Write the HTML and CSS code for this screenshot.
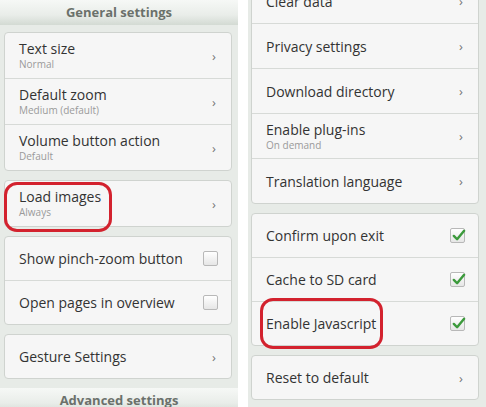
FILE: index.html
```html
<!DOCTYPE html>
<html lang="en">
<head>
    <meta charset="UTF-8">
    <meta name="viewport" content="width=device-width, initial-scale=1.0">
    <title>Browser settings</title>
    <link rel="stylesheet" href="styles.css">
</head>
<body>

    <div class="screens">

        <!-- left screen: general settings -->
        <div class="panel panel-left">
            <div class="section-title">General settings</div>

            <div class="card">
                <div class="row sub">
                    <div class="label"><div class="title">Text size</div><div class="summary">Normal</div></div>
                    <span class="chevron">&rsaquo;</span>
                </div>
                <div class="row sub">
                    <div class="label"><div class="title">Default zoom</div><div class="summary">Medium (default)</div></div>
                    <span class="chevron">&rsaquo;</span>
                </div>
                <div class="row sub">
                    <div class="label"><div class="title">Volume button action</div><div class="summary">Default</div></div>
                    <span class="chevron">&rsaquo;</span>
                </div>
            </div>

            <div class="card">
                <div class="row sub">
                    <div class="label"><div class="title">Load images</div><div class="summary">Always</div></div>
                    <span class="chevron">&rsaquo;</span>
                    <span class="ring ring-images"></span>
                </div>
            </div>

            <div class="card">
                <div class="row">
                    <div class="title">Show pinch-zoom button</div>
                    <span class="checkbox"></span>
                </div>
                <div class="row">
                    <div class="title">Open pages in overview</div>
                    <span class="checkbox"></span>
                </div>
            </div>

            <div class="card">
                <div class="row">
                    <div class="title">Gesture Settings</div>
                    <span class="chevron">&rsaquo;</span>
                </div>
            </div>

            <div class="section-title">Advanced settings</div>
        </div>

        <!-- right screen: advanced settings, scrolled -->
        <div class="panel panel-right">
            <div class="card scrolled">
                <div class="row tall">
                    <div class="title">Clear data</div>
                    <span class="chevron">&rsaquo;</span>
                </div>
                <div class="row tall">
                    <div class="title">Privacy settings</div>
                    <span class="chevron">&rsaquo;</span>
                </div>
                <div class="row tall">
                    <div class="title">Download directory</div>
                    <span class="chevron">&rsaquo;</span>
                </div>
                <div class="row tall">
                    <div class="label"><div class="title">Enable plug-ins</div><div class="summary">On demand</div></div>
                    <span class="chevron">&rsaquo;</span>
                </div>
                <div class="row tall">
                    <div class="title">Translation language</div>
                    <span class="chevron">&rsaquo;</span>
                </div>
            </div>

            <div class="card">
                <div class="row">
                    <div class="title">Confirm upon exit</div>
                    <span class="checkbox checked"><svg viewBox="0 0 16 16"><path d="M3 8.5 L6.5 12 L14 3" /></svg></span>
                </div>
                <div class="row">
                    <div class="title">Cache to SD card</div>
                    <span class="checkbox checked"><svg viewBox="0 0 16 16"><path d="M3 8.5 L6.5 12 L14 3" /></svg></span>
                </div>
                <div class="row">
                    <div class="title">Enable Javascript</div>
                    <span class="checkbox checked"><svg viewBox="0 0 16 16"><path d="M3 8.5 L6.5 12 L14 3" /></svg></span>
                    <span class="ring ring-js"></span>
                </div>
            </div>

            <div class="card">
                <div class="row">
                    <div class="title">Reset to default</div>
                    <span class="chevron">&rsaquo;</span>
                </div>
            </div>
        </div>

    </div>

</body>
</html>
```

FILE: styles.css
```css
body {
    margin: 0;
    background-color: #ffffff;
    font-family: "Open Sans", "DejaVu Sans", sans-serif;
    color: #333333;
}
.screens {
    display: flex;
    gap: 10px;
    height: 407px;
    overflow: hidden;
}
.panel {
    width: 238px;
    height: 407px;
    background-color: #e7ebe7;
    display: flex;
    flex-direction: column;
    gap: 9px;
    overflow: hidden;
}
.panel-left {
    padding-left: 4px;
    width: 234px;
}
.panel-right {
    padding-left: 3px;
    width: 235px;
}
.section-title {
    flex: none;
    height: 25px;
    margin-left: -4px;
    margin-bottom: -2px;
    background: linear-gradient(#f6f8f6, #e9ede9 60%, #d3dad3);
    color: #6b716b;
    font-size: 13px;
    font-weight: bold;
    line-height: 24px;
    text-align: center;
}
.card {
    flex: none;
    width: 226px;
    background-color: #f6f6f6;
    border: 1px solid #cfd3cf;
    border-radius: 4px;
}
.card.scrolled {
    margin-top: -22px;
}
.row {
    position: relative;
    display: flex;
    align-items: center;
    justify-content: space-between;
    height: 43px;
    padding: 0 13px 0 14px;
    border-top: 1px solid #d7dad7;
}
.row:first-child {
    border-top: none;
}
.row.sub {
    height: 45px;
}
.row.tall {
    height: 44px;
}
.title {
    font-size: 14px;
    line-height: 17px;
    color: #333333;
}
.summary {
    font-size: 10px;
    line-height: 13px;
    margin-top: 1px;
    color: #9a9a9a;
}
.chevron {
    font-size: 13px;
    color: #777777;
    padding-right: 2px;
}
.checkbox {
    position: relative;
    width: 13px;
    height: 13px;
    border: 1px solid #b8b8b8;
    border-radius: 2px;
    background: linear-gradient(#ffffff, #e6e6e6);
}
.checkbox svg {
    position: absolute;
    left: 0;
    top: -1px;
    width: 15px;
    height: 15px;
}
.checkbox svg path {
    fill: none;
    stroke: #3c9a3c;
    stroke-width: 2.6;
    stroke-linecap: round;
    stroke-linejoin: round;
}
.ring {
    position: absolute;
    border: 3px solid #d3222e;
    border-radius: 13px;
}
.ring-images {
    left: -1px;
    top: 1px;
    width: 102px;
    height: 44px;
}
.ring-js {
    left: 8px;
    top: -4px;
    width: 117px;
    height: 45px;
}
```
